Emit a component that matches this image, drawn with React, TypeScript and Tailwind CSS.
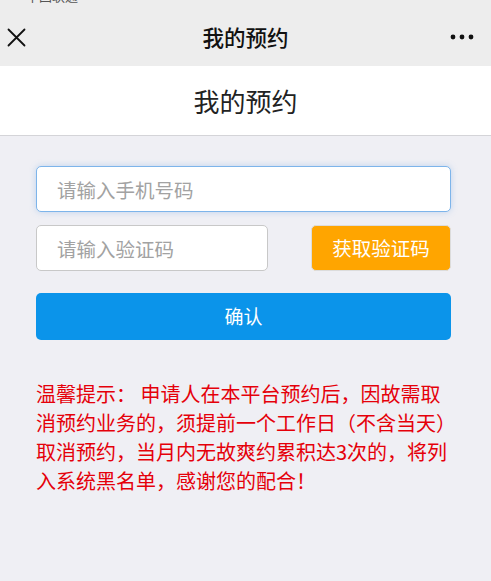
import React, { useState } from "react";

const font = { fontFamily: '"Noto Sans CJK SC", "Noto Sans", sans-serif' };

const CloseIcon = () => (
  <svg width="19" height="19" viewBox="0 0 19 19" fill="none">
    <path d="M1.5 1.5 L17.5 17.5 M17.5 1.5 L1.5 17.5" stroke="#111" strokeWidth="1.8" strokeLinecap="round" />
  </svg>
);

const MoreIcon = () => (
  <svg width="24" height="6" viewBox="0 0 24 6">
    <circle cx="3" cy="3" r="2.4" fill="#111" />
    <circle cx="12" cy="3" r="2.4" fill="#111" />
    <circle cx="21" cy="3" r="2.4" fill="#111" />
  </svg>
);

export default function App() {
  const [phone, setPhone] = useState("");
  const [code, setCode] = useState("");

  return (
    <div className="min-h-[581px] w-[491px] bg-[#efeff4]" style={font}>
      {/* title bar of the wechat webview */}
      <div className="bg-[#ededed]">
        <div className="h-[8px] overflow-hidden">
          <div className="-mt-[12px] pl-[26px] text-[13px] leading-[16px] text-[#555]">中国联通</div>
        </div>
        <div className="h-[58px] grid grid-cols-[1fr_auto_1fr] items-center px-[7px]">
          <div className="flex">
            <CloseIcon />
          </div>
          <div className="text-[21.5px] text-[#111] font-medium">我的预约</div>
          <div className="flex justify-end pr-[10px]">
            <MoreIcon />
          </div>
        </div>
      </div>

      <div className="h-[70px] bg-white border-b border-[#d4d4d8] flex items-center justify-center">
        <h1 className="text-[26px] text-[#222]">我的预约</h1>
      </div>

      <div className="pl-9 pr-10 pt-[30px]">
        <input
          value={phone}
          onChange={(e) => setPhone(e.target.value)}
          placeholder="请输入手机号码"
          className="w-full h-[46px] rounded-[5px] border border-[#7db4ea] bg-white px-5 text-[19.5px] text-[#333] placeholder:text-[#a2a2a2] outline-none shadow-[0_0_6px_rgba(100,160,230,0.35)]"
        />

        <div className="mt-[13px] flex items-center justify-between">
          <input
            value={code}
            onChange={(e) => setCode(e.target.value)}
            placeholder="请输入验证码"
            className="w-[232px] h-[46px] rounded-[5px] border border-[#c8c8c8] bg-white px-5 text-[19.5px] text-[#333] placeholder:text-[#a2a2a2] outline-none"
          />
          <button className="w-[140px] h-[46px] rounded-[5px] border border-[#dcdcdc] bg-[#ffa500] text-white text-[19.5px]">
            获取验证码
          </button>
        </div>

        <button className="mt-[22px] w-full h-[47px] rounded-[5px] bg-[#0b94ea] text-white text-[19px]">
          确认
        </button>

        <p className="mt-[39px] w-[421px] text-[20px] leading-[29px] text-[#e5000a]">
          温馨提示： 申请人在本平台预约后，因故需取消预约业务的，须提前一个工作日（不含当天）取消预约，当月内无故爽约累积达3次的，将列入系统黑名单，感谢您的配合！
        </p>
      </div>
    </div>
  );
}
